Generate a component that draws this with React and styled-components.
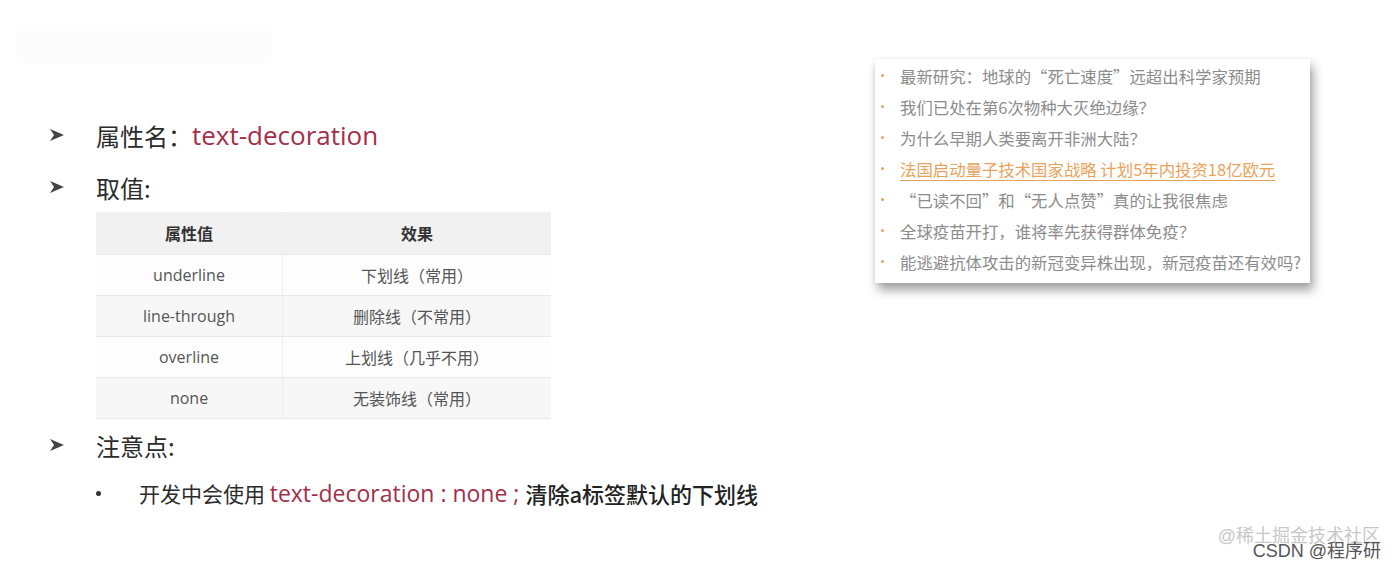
import React from "react";
import styled, { createGlobalStyle } from "styled-components";

const GlobalStyle = createGlobalStyle`
    html, body {
        margin: 0;
        padding: 0;
        background: #ffffff;
    }
    body {
        width: 1397px;
        height: 566px;
        overflow: hidden;
        font-family: "Open Sans", "Noto Sans CJK SC", sans-serif;
    }
`;

const colors = {
    text: "#2b2b2b",
    red: "#a3304a",
    gray: "#555555",
    orange: "#e8a25c",
    cardText: "#8c8c8c",
};

const Page = styled.div`
    position: relative;
    width: 1397px;
    height: 566px;
    display: flex;
    flex-direction: row;
    justify-content: space-between;
`;

const Ghost = styled.div`
    position: absolute;
    left: 16px;
    top: 30px;
    width: 256px;
    height: 34px;
    background: #fcfcfc;
    filter: blur(3px);
`;

const Left = styled.div`
    display: flex;
    flex-direction: column;
    padding: 117px 0 0 50px;
`;

const Point = styled.div`
    display: flex;
    flex-direction: row;
    align-items: center;
    height: 36px;
    margin-top: ${p => p.top || 0}px;
    font-family: "Noto Sans CJK SC", sans-serif;
    font-size: 24px;
    color: ${colors.text};
`;

const Arrow = styled.svg`
    width: 14px;
    height: 12px;
    margin-right: 32px;
    flex-shrink: 0;
`;

const Red = styled.span`
    font-family: "Open Sans", "Noto Sans CJK SC", sans-serif;
    font-size: ${p => p.size}px;
    color: ${colors.red};
    white-space: pre;
`;

const Strong = styled.span`
    font-size: 22px;
    font-weight: 500;
    color: #222222;
    white-space: pre;
`;

const Table = styled.div`
    display: grid;
    grid-template-columns: 187px 268px;
    margin: 7px 0 0 46px;
    width: 455px;
    background: #ffffff;
`;

const Cell = styled.div`
    height: ${p => (p.head ? 42 : 40)}px;
    display: flex;
    align-items: center;
    justify-content: center;
    background: ${p => (p.head ? "#f1f1f1" : p.shade ? "#f7f7f7" : "#fdfdfd")};
    border-bottom: 1px solid #e9e9e9;
    border-right: ${p => (p.first ? "1px solid #eeeeee" : "none")};
    font-family: "Open Sans", "Noto Sans CJK SC", sans-serif;
    font-size: 16px;
    font-weight: ${p => (p.head ? 700 : 400)};
    color: ${p => (p.head ? "#333333" : colors.gray)};
`;

const SubPoint = styled.div`
    display: flex;
    flex-direction: row;
    align-items: center;
    margin: 14px 0 0 46px;
    font-family: "Noto Sans CJK SC", sans-serif;
    font-size: 21px;
    color: ${colors.text};
    white-space: pre;
`;

const Dot = styled.span`
    width: 5px;
    height: 5px;
    border-radius: 50%;
    background: #333;
    margin-right: 38px;
`;

const Card = styled.div`
    margin: 59px 87px 0 0;
    width: 435px;
    height: 224px;
    padding: 1px 0 0 6px;
    box-sizing: border-box;
    background: #ffffff;
    box-shadow: 3px 7px 10px rgba(0, 0, 0, 0.38), 0 0 4px rgba(0, 0, 0, 0.06);
    display: flex;
    flex-direction: column;
`;

const News = styled.div`
    height: 31px;
    display: flex;
    align-items: center;
    font-family: "Noto Sans CJK SC", serif;
    font-size: 16.4px;
    color: ${p => (p.active ? colors.orange : colors.cardText)};
    text-decoration: ${p => (p.active ? "underline" : "none")};
    text-underline-offset: 4px;
    white-space: nowrap;
`;

const NewsDot = styled.span`
    width: 3px;
    height: 3px;
    background: ${colors.orange};
    border-radius: 50%;
    margin-right: 16px;
    flex-shrink: 0;
`;

const Mark = styled.div`
    position: absolute;
    right: ${p => p.right}px;
    bottom: ${p => p.bottom}px;
    font-family: "Liberation Sans", "Noto Sans CJK SC", sans-serif;
    font-size: ${p => p.size}px;
    color: ${p => p.color};
    white-space: nowrap;
`;

const rows = [
    ["underline", "下划线（常用）"],
    ["line-through", "删除线（不常用）"],
    ["overline", "上划线（几乎不用）"],
    ["none", "无装饰线（常用）"],
];

const news = [
    "最新研究：地球的“死亡速度”远超出科学家预期",
    "我们已处在第6次物种大灭绝边缘？",
    "为什么早期人类要离开非洲大陆？",
    "法国启动量子技术国家战略 计划5年内投资18亿欧元",
    "“已读不回”和“无人点赞”真的让我很焦虑",
    "全球疫苗开打，谁将率先获得群体免疫？",
    "能逃避抗体攻击的新冠变异株出现，新冠疫苗还有效吗?",
];

function ArrowIcon() {
    return (
        <Arrow viewBox="0 0 14 12">
            <path d="M0 0 L14 6 L0 12 L4 6 Z" fill="#444444" />
        </Arrow>
    );
}

export default function App() {
    return (
        <Page>
            <GlobalStyle />
            <Ghost />
            <Left>
                <Point>
                    <ArrowIcon />
                    属性名：<Red size={26}>text-decoration</Red>
                </Point>
                <Point top={16}>
                    <ArrowIcon />
                    取值:
                </Point>
                <Table>
                    <Cell head first>属性值</Cell>
                    <Cell head>效果</Cell>
                    {rows.map(([k, v], i) => (
                        <React.Fragment key={k}>
                            <Cell first shade={i % 2 === 1}>{k}</Cell>
                            <Cell shade={i % 2 === 1}>{v}</Cell>
                        </React.Fragment>
                    ))}
                </Table>
                <Point top={8}>
                    <ArrowIcon />
                    注意点:
                </Point>
                <SubPoint>
                    <Dot />
                    {"开发中会使用 "}
                    <Red size={23}>{"text-decoration : none ; "}</Red>
                    <Strong>清除a标签默认的下划线</Strong>
                </SubPoint>
            </Left>
            <Card>
                {news.map((n, i) => (
                    <News key={n} active={i === 3}>
                        <NewsDot />
                        {n}
                    </News>
                ))}
            </Card>
            <Mark right={17} bottom={19} size={18} color="#c8c8c8">@稀土掘金技术社区</Mark>
            <Mark right={16} bottom={4} size={18} color="#555555">CSDN @程序研</Mark>
        </Page>
    );
}
